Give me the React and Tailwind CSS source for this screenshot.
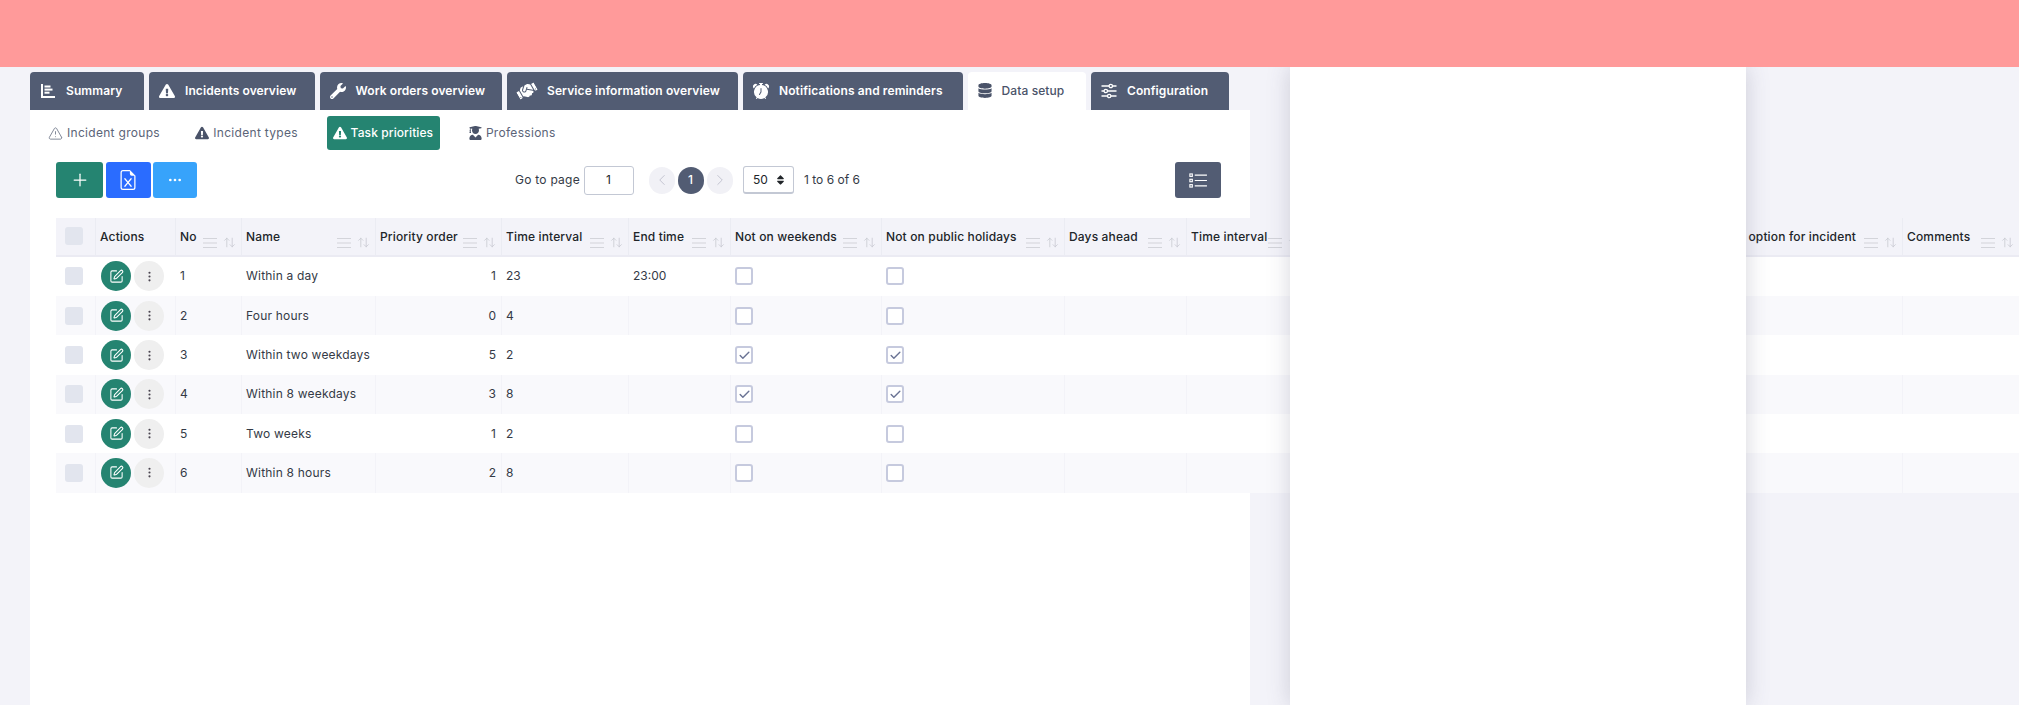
import { ArrowUpDown, Check, ChevronLeft, ChevronRight, EllipsisVertical, Plus, Ellipsis, SquarePen, TriangleAlert } from 'lucide-react'
import { FaExclamationTriangle, FaWrench, FaHandshake, FaDatabase, FaUserGraduate, FaSort } from 'react-icons/fa'
import { BsAlarmFill, BsFileEarmarkExcel } from 'react-icons/bs'

function SummaryIcon({ className }) {
  return (
    <svg viewBox="0 0 16 16" className={className} fill="currentColor">
      <path d="M1 1h2v12h12v2H1z" />
      <rect x="4.5" y="2.5" width="6" height="2" />
      <rect x="4.5" y="5.6" width="8" height="2" />
      <rect x="4.5" y="8.7" width="5" height="2" />
    </svg>
  )
}

function SlidersIcon({ className }) {
  return (
    <svg viewBox="0 0 16 16" className={className} fill="none" stroke="currentColor" strokeWidth="1.3">
      <path d="M0.5 3h7.5M11.5 3h4M0.5 8h2.5M6.5 8h9M0.5 13h6M10 13h5.5" />
      <circle cx="9.8" cy="3" r="1.7" />
      <circle cx="4.8" cy="8" r="1.7" />
      <circle cx="8.2" cy="13" r="1.7" />
    </svg>
  )
}

function ListIcon({ className }) {
  return (
    <svg viewBox="0 0 20 16" className={className} fill="none" stroke="currentColor">
      <rect x="0.8" y="1" width="2.6" height="2.6" strokeWidth="1.2" />
      <rect x="0.8" y="6.7" width="2.6" height="2.6" strokeWidth="1.2" />
      <rect x="0.8" y="12.4" width="2.6" height="2.6" strokeWidth="1.2" />
      <path d="M6 2.3h13M6 8h13M6 13.7h13" strokeWidth="1.3" />
    </svg>
  )
}

function FilterLines() {
  return (
    <svg viewBox="0 0 14 12" className="w-[14px] h-[12px] text-[#d3d4da]" stroke="currentColor" strokeWidth="1.2">
      <path d="M0 1.5h14M0 6h14M0 10.5h14" />
    </svg>
  )
}

const tabs = [
  { label: 'Summary', icon: <SummaryIcon className="w-[16px] h-[16px]" />, box: 'w-[114px]' },
  { label: 'Incidents overview', icon: <FaExclamationTriangle className="w-[16px] h-[16px]" />, box: 'w-[165.5px]' },
  { label: 'Work orders overview', icon: <FaWrench className="w-[16px] h-[16px]" />, box: 'w-[182.5px]' },
  { label: 'Service information overview', icon: <FaHandshake className="w-[20px] h-[18px] -rotate-[30deg]" />, box: 'w-[231px]' },
  { label: 'Notifications and reminders', icon: <BsAlarmFill className="w-[16px] h-[16px]" />, box: 'w-[219.5px]' },
  { label: 'Data setup', icon: <FaDatabase className="w-[14px] h-[15px]" />, box: 'w-[118.5px]', active: true },
  { label: 'Configuration', icon: <SlidersIcon className="w-[16px] h-[16px]" />, box: 'w-[137.5px]' },
]

const subTabs = [
  { label: 'Incident groups', icon: <TriangleAlert className="w-[15px] h-[15px]" strokeWidth={1.2} />, box: 'w-[124px]' },
  { label: 'Incident types', icon: <FaExclamationTriangle className="w-[14px] h-[14px] text-[#4a5369]" />, box: 'w-[114px]' },
  { label: 'Task priorities', icon: <FaExclamationTriangle className="w-[14px] h-[14px]" />, box: 'w-[113px]', active: true },
  { label: 'Professions', icon: <FaUserGraduate className="w-[13px] h-[14px] text-[#4a5369]" />, box: 'w-[98px]' },
]

const headers = [
  { label: 'No' },
  { label: 'Name' },
  { label: 'Priority order' },
  { label: 'Time interval' },
  { label: 'End time' },
  { label: 'Not on weekends' },
  { label: 'Not on public holidays' },
  { label: 'Days ahead' },
  { label: 'Time interval' },
  { label: 'option for incident', right: true },
  { label: 'Comments' },
]

const rows = [
  { no: 1, name: 'Within a day', order: 1, interval: 23, end: '23:00', off: false },
  { no: 2, name: 'Four hours', order: 0, interval: 4, end: '', off: false },
  { no: 3, name: 'Within two weekdays', order: 5, interval: 2, end: '', off: true },
  { no: 4, name: 'Within 8 weekdays', order: 3, interval: 8, end: '', off: true },
  { no: 5, name: 'Two weeks', order: 1, interval: 2, end: '', off: false },
  { no: 6, name: 'Within 8 hours', order: 2, interval: 8, end: '', off: false },
]

const gridCols = 'grid grid-cols-[39px_80px_66px_134px_126px_127px_102px_151px_183px_122px_120px_596px_117px]'

function CheckCell({ checked, line }) {
  return (
    <div className={`flex items-center pl-[4px] border-l ${line}`}>
      <span className="flex items-center justify-center w-[18px] h-[18px] rounded-[3px] border-2 border-[#c6cade] bg-white">
        {checked && <Check className="w-[13px] h-[13px] text-[#6a7394]" strokeWidth={2.6} />}
      </span>
    </div>
  )
}

export default function App() {
  return (
    <div className="relative h-[705px] overflow-hidden bg-[#f3f3f9] [font-family:Inter,sans-serif] text-[12px] text-[#343a46]">
      <div className="relative z-20 h-[67px] bg-[#ff9a9a]"></div>

      {/* Right hand panel lying over the page */}
      <div className="absolute z-10 top-[67px] bottom-0 left-[1290px] w-[456px] bg-white shadow-[0_0_22px_rgba(70,70,100,0.22)]"></div>

      <div className="flex gap-[5px] pl-[30px] pt-[5px] h-[43px]">
        {tabs.map((tab) => (
          <div
            key={tab.label}
            className={`${tab.box} flex items-center gap-[10px] pl-[10px] pb-[1px] rounded-t-[4px] text-[12px] ${
              tab.active ? 'bg-white text-[#4a5369] font-medium' : 'bg-[#525c73] text-white font-semibold'
            }`}
          >
            {tab.icon}
            <span className="tracking-[0.1px] whitespace-nowrap">{tab.label}</span>
          </div>
        ))}
      </div>

      <div className="ml-[30px] w-[1220px] h-[595px] bg-white pt-[6px]">
        <div className="flex gap-[23.3px] ml-[12px] h-[34px]">
          {subTabs.map((tab) => (
            <div
              key={tab.label}
              className={`${tab.box} flex items-center gap-[4px] pl-[6px] rounded-[3px] text-[12px] whitespace-nowrap ${
                tab.active ? 'bg-[#258471] text-white font-medium tracking-[0.1px]' : 'text-[#5b6478] tracking-[0.3px]'
              }`}
            >
              {tab.icon}
              <span>{tab.label}</span>
            </div>
          ))}
        </div>

        <div className="flex items-center ml-[26px] mt-[12px] w-[1165px] h-[36px]">
          <div className="flex gap-[2.5px]">
            <button className="flex items-center justify-center w-[47px] h-[36px] rounded-[3px] bg-[#258471] text-white">
              <Plus className="w-[20px] h-[20px]" strokeWidth={1.5} />
            </button>
            <button className="flex items-center justify-center w-[45px] h-[36px] rounded-[3px] bg-[#2a6cff] text-white">
              <BsFileEarmarkExcel className="w-[20px] h-[20px]" />
            </button>
            <button className="flex items-center justify-center w-[44px] h-[36px] rounded-[3px] bg-[#37a3fb] text-white">
              <Ellipsis className="w-[16px] h-[16px]" />
            </button>
          </div>

          <div className="flex items-center ml-[318px] text-[#343a46]">
            <span className="w-[68.5px] whitespace-nowrap tracking-[0.25px]">Go to page</span>
            <div className="flex items-center justify-center w-[50px] h-[29px] rounded-[3px] border border-[#c3c8d4] text-[#212529]">1</div>
            <div className="flex items-center gap-[3px] ml-[15px]">
              <span className="flex items-center justify-center w-[26px] h-[27px] rounded-full bg-[#f1f1f6] text-[#b4b6c4]">
                <ChevronLeft className="w-[18px] h-[18px]" strokeWidth={1} />
              </span>
              <span className="flex items-center justify-center w-[26px] h-[27px] rounded-full bg-[#525c73] text-white font-medium">1</span>
              <span className="flex items-center justify-center w-[26px] h-[27px] rounded-full bg-[#f1f1f6] text-[#b4b6c4]">
                <ChevronRight className="w-[18px] h-[18px]" strokeWidth={1} />
              </span>
            </div>
            <div className="flex items-center justify-between ml-[10.5px] w-[51px] h-[28px] pl-[9px] pr-[7px] rounded-[3px] border border-[#c3c8d4] border-b-2 text-[#212529]">
              <span>50</span>
              <FaSort className="w-[11px] h-[12px]" />
            </div>
            <span className="ml-[10px] whitespace-nowrap">1 to 6 of 6</span>
          </div>

          <button className="flex items-center justify-center ml-auto w-[46px] h-[36px] rounded-[3px] bg-[#525c73] text-white">
            <ListIcon className="w-[19px] h-[15px]" />
          </button>
        </div>

        <div className="ml-[26px] mt-[20px] w-[1963px]">
          <div className={`${gridCols} h-[38.7px] bg-[#f3f3f9] border-b-2 border-[#ebebf3] font-medium text-[#212529]`}>
            <div className="flex items-center pl-[9px]">
              <span className="w-[18px] h-[18px] rounded-[3px] bg-[#e2e5ee]"></span>
            </div>
            <div className="flex items-center pl-[4px] pt-[2px] border-l border-[#ebecf3] tracking-[0.15px]">Actions</div>
            {headers.map((h, i) => (
              <div key={i} className={`relative flex items-center pl-[4px] pt-[2px] border-l border-[#ebecf3] ${h.right ? 'justify-end pr-[46px]' : ''}`}>
                <span className="tracking-[0.15px] whitespace-nowrap">{h.label}</span>
                <span className="absolute right-[5px] top-[18px] flex items-center gap-[6px]">
                  <FilterLines />
                  <ArrowUpDown className="w-[13px] h-[13px] text-[#c6c8cf]" strokeWidth={1.4} />
                </span>
              </div>
            ))}
          </div>

          {rows.map((row, i) => {
            const line = i % 2 === 1 ? 'border-[#f3f3f8]' : 'border-white'
            return (
              <div key={row.no} className={`${gridCols} h-[39.33px] ${i % 2 === 1 ? 'bg-[#f9f9fc]' : 'bg-white'}`}>
                <div className="flex items-center pl-[9px]">
                  <span className="w-[18px] h-[18px] rounded-[3px] bg-[#e2e5ee]"></span>
                </div>
                <div className={`flex items-center gap-[3px] pl-[5px] border-l ${line}`}>
                  <span className="flex items-center justify-center w-[30px] h-[30px] rounded-full bg-[#258471] text-white">
                    <SquarePen className="w-[15px] h-[15px]" strokeWidth={1.7} />
                  </span>
                  <span className="flex items-center justify-center w-[30px] h-[30px] rounded-full bg-[#efefef] text-[#4a4550]">
                    <EllipsisVertical className="w-[13px] h-[13px]" strokeWidth={2} />
                  </span>
                </div>
                <div className={`flex items-center pl-[4px] border-l ${line}`}>{row.no}</div>
                <div className={`flex items-center pl-[4px] border-l ${line} whitespace-nowrap tracking-[0.2px]`}>{row.name}</div>
                <div className={`flex items-center justify-end pr-[5px] border-l ${line}`}>{row.order}</div>
                <div className={`flex items-center pl-[4px] border-l ${line}`}>{row.interval}</div>
                <div className={`flex items-center pl-[4px] border-l ${line}`}>{row.end}</div>
                <CheckCell checked={row.off} line={line} />
                <CheckCell checked={row.off} line={line} />
                <div className={`border-l ${line}`}></div>
                <div className={`border-l ${line}`}></div>
                <div className={`border-l ${line}`}></div>
                <div className={`border-l ${line}`}></div>
              </div>
            )
          })}
        </div>
      </div>
    </div>
  )
}
